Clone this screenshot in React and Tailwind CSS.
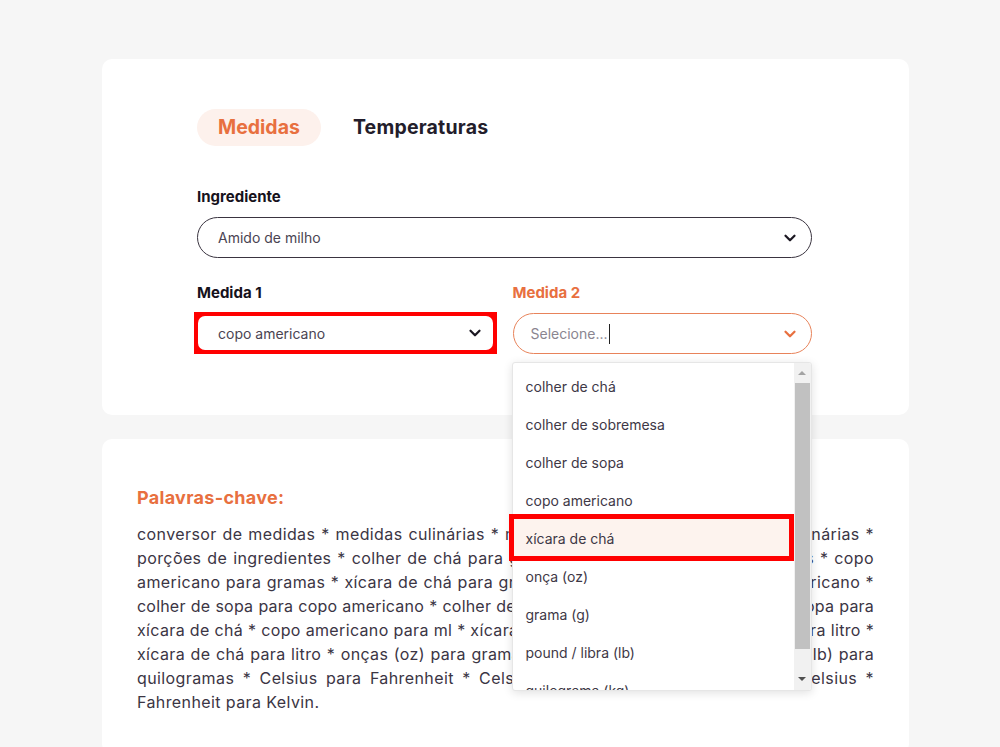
import React from 'react';
import { ChevronDown } from 'lucide-react';

const opcoes = [
	'colher de chá',
	'colher de sobremesa',
	'colher de sopa',
	'copo americano',
	'xícara de chá',
	'onça (oz)',
	'grama (g)',
	'pound / libra (lb)',
	'quilograma (kg)',
];

// linhas do texto justificado, como no layout original
const linhas = [
	{ t: 'conversor de medidas * medidas culinárias * medidas de cozinha * conversões culinárias *', c: 'tracking-[0.4px]' },
	{ t: 'porções de ingredientes * colher de chá para gramas * colher de sopa para gramas * copo', c: 'tracking-[0.4px]' },
	{ t: 'americano para gramas * xícara de chá para gramas * colher de chá para copo americano *', c: 'tracking-[0.4px]' },
	{ t: 'colher de sopa para copo americano * colher de chá para xícara de chá * colher de sopa para', c: 'tracking-[0.2px]' },
	{ t: 'xícara de chá * copo americano para ml * xícara de chá para ml * copo americano para litro *', c: 'tracking-[0.35px]' },
	{ t: 'xícara de chá para litro * onças (oz) para gramas * gramas para onças (oz) * libras (lb) para', c: 'tracking-[0.35px]' },
	{ t: 'quilogramas * Celsius para Fahrenheit * Celsius para Kelvin * Fahrenheit para Celsius *', c: 'tracking-[0.4px]' },
];

const ConversorMedidas = () => {
	return (
		<div className="bg-[#f6f6f6] min-h-screen pt-[59px] pb-10 font-['Inter',sans-serif]">
			{/* --- Card do conversor --- */}
			<div className="ml-[102px] w-[807px] bg-white rounded-[10px] pt-[50px] pb-[61px]">
				<div className="ml-[95px] w-[615px]">
					{/* Tabs */}
					<div className="flex items-center gap-[12px]">
						<button className="h-[37px] px-[21px] rounded-full bg-[#fdf1ec] text-[#e8703f] text-[19.5px] font-bold">
							Medidas
						</button>
						<button className="h-[37px] px-[20px] rounded-full text-[#231d2b] text-[19.5px] font-bold tracking-[0.2px]">
							Temperaturas
						</button>
					</div>

					{/* Ingrediente */}
					<div className="mt-[41px]">
						<label className="block text-[15px] font-bold text-[#16121c] leading-[20px]">Ingrediente</label>
						<div className="mt-[10px] h-[41px] rounded-full border border-[#3a3440] flex items-center justify-between pl-[20px] pr-[12px]">
							<span className="text-[14px] text-[#4a4452]">Amido de milho</span>
							<ChevronDown size={18} strokeWidth={3} className="text-[#1c1822]" />
						</div>
					</div>

					{/* Medidas 1 e 2 */}
					<div className="mt-[25px] grid grid-cols-2 gap-[16px]">
						<div>
							<label className="block text-[15px] font-bold text-[#16121c] leading-[20px]">Medida 1</label>
							<div className="mt-[9px] -ml-[3px] w-[303px] h-[42px] border-[4px] border-[#ff0000] bg-[#ff0000]">
								<div className="h-full rounded-[7px] bg-white flex items-center justify-between pl-[20px] pr-[9px]">
									<span className="text-[14px] text-[#4a4452]">copo americano</span>
									<ChevronDown size={18} strokeWidth={3} className="text-[#1c1822]" />
								</div>
							</div>
						</div>

						<div className="relative">
							<label className="block text-[15px] font-bold text-[#e8703f] leading-[20px]">Medida 2</label>
							<div className="mt-[10px] h-[41px] rounded-full border border-[#e8835a] flex items-center justify-between pl-[17px] pr-[12px]">
								<span className="flex items-center text-[14px] text-[#8a8590]">
									Selecione...
									<span className="ml-[1px] w-[1px] h-[20px] bg-[#222]"></span>
								</span>
								<ChevronDown size={18} strokeWidth={3} className="text-[#e8703f]" />
							</div>

							{/* Lista aberta */}
							<div className="absolute z-10 left-[-1px] top-[79px] w-[300px] h-[329px]">
								<div className="w-full h-full bg-white border border-[#e6e6e6] rounded-[3px] shadow-[0_2px_10px_rgba(0,0,0,0.12)] flex overflow-hidden">
									<ul className="flex-1 pt-[4px]">
										{opcoes.map((op) => (
											<li
												key={op}
												className={
													op === 'xícara de chá'
														? 'h-[38px] flex items-center pl-[13px] text-[14px] text-[#3e3846] bg-[#fdf3ee]'
														: 'h-[38px] flex items-center pl-[13px] text-[14px] text-[#3e3846]'
												}
											>
												{op}
											</li>
										))}
									</ul>
									{/* Barra de rolagem */}
									<div className="w-[17px] bg-[#f1f1f1] flex flex-col items-center">
										<div className="h-[20px] flex items-center justify-center">
											<div className="w-0 h-0 border-l-[4px] border-r-[4px] border-b-[4px] border-l-transparent border-r-transparent border-b-[#a3a3a3]"></div>
										</div>
										<div className="w-[15px] h-[266px] bg-[#c1c1c1]"></div>
										<div className="flex-1 flex items-end justify-center pb-[9px]">
											<div className="w-0 h-0 border-l-[4px] border-r-[4px] border-t-[4px] border-l-transparent border-r-transparent border-t-[#505050]"></div>
										</div>
									</div>
								</div>
								{/* marcação vermelha sobre a opção */}
								<div className="absolute left-[-3px] top-[152px] w-[285px] h-[47px] border-[5px] border-[#ff0000]"></div>
							</div>
						</div>
					</div>
				</div>
			</div>

			{/* --- Card de palavras-chave --- */}
			<div className="mt-[24px] ml-[102px] w-[807px] bg-white rounded-[10px] pt-[47px] pb-[40px] px-[35px]">
				<h3 className="text-[18px] font-bold text-[#e8703f] leading-[24px] tracking-[0.3px]">Palavras-chave:</h3>
				<div className="mt-[12px] text-[16px] leading-[24px] text-[#3b3544]">
					{linhas.map((l, i) => (
						<p key={i} className={`text-justify [text-align-last:justify] whitespace-nowrap ${l.c}`}>
							{l.t}
						</p>
					))}
					<p className="tracking-[0.4px]">Fahrenheit para Kelvin.</p>
				</div>
			</div>
		</div>
	);
};

export default ConversorMedidas;
